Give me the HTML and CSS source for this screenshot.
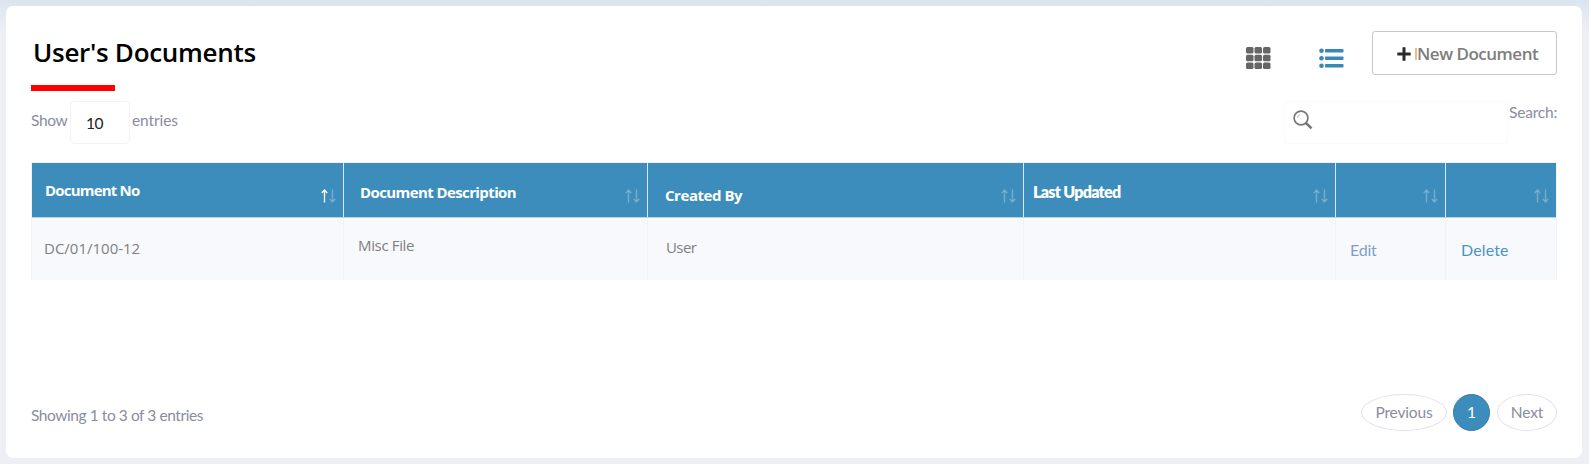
FILE: index.html
```html
<!DOCTYPE html>
<html lang="en">
<head>
<meta charset="utf-8">
<title>User's Documents</title>
<link rel="stylesheet" href="styles.css">
</head>
<body>
<svg class="defs" aria-hidden="true">
  <symbol id="up" viewBox="0 0 7 14"><path d="M3.5 13.5V1M.8 4L3.5 1l2.700 3" fill="none" stroke="currentColor" stroke-width="1.300"/></symbol>
  <symbol id="down" viewBox="0 0 7 14"><path d="M3.500 .5V13M.8 10l2.700 3 2.700-3" fill="none" stroke="currentColor" stroke-width="1.300"/></symbol>
</svg>
<div class="page-bg">
<main class="card">
  <header class="head">
    <h1 class="title">User's Documents</h1>
    <div class="actions">
      <svg class="grid-icon" viewBox="0 0 25 23" fill="#666"><rect x="0" y="0" width="7.500" height="6.500" rx="1.500"/><rect x="8.500" y="0" width="7.500" height="6.500" rx="1.500"/><rect x="17" y="0" width="7.500" height="6.500" rx="1.500"/><rect x="0" y="7.700" width="7.500" height="6.500" rx="1.500"/><rect x="8.500" y="7.700" width="7.500" height="6.500" rx="1.500"/><rect x="17" y="7.700" width="7.500" height="6.500" rx="1.500"/><rect x="0" y="15.400" width="7.500" height="6.500" rx="1.500"/><rect x="8.500" y="15.400" width="7.500" height="6.500" rx="1.500"/><rect x="17" y="15.400" width="7.500" height="6.500" rx="1.500"/></svg>
      <svg class="list-icon" viewBox="0 0 25 21" fill="#3787bb"><circle cx="2.500" cy="2.700" r="2.300"/><circle cx="2.500" cy="10.200" r="2.300"/><circle cx="2.500" cy="17.700" r="2.300"/><rect x="6" y="1" width="18.500" height="3.500" rx=".8"/><rect x="6" y="8.500" width="18.500" height="3.500" rx=".8"/><rect x="6" y="16" width="18.500" height="3.500" rx=".8"/></svg>
      <button class="new-btn"><svg class="plus" viewBox="0 0 14 14"><path d="M7 .3v13.400M.3 7h13.400" stroke="#2b2b2b" stroke-width="3"/></svg><i class="caret"></i><span>New Document</span></button>
    </div>
  </header>
  <div class="accent"></div>
  <div class="controls">
    <label class="length"><span class="show">Show</span><span class="select">10</span><span class="entries">entries</span></label>
    <label class="search"><span class="search-box"><svg class="lens" viewBox="0 0 20 20" fill="none" stroke="#777"><circle cx="8" cy="8" r="6.900" stroke-width="1.700"/><path d="M4.500 8A3.500 3.500 0 0 1 7 4.500" stroke="#bbb" stroke-width="1"/><path d="M13 13l5.500 5.300" stroke-width="2.500"/></svg></span><span class="search-text">Search:</span></label>
  </div>
  <div class="table">
    <div class="row header">
      <div class="cell h-no"><span>Document No</span><span class="sort asc"><svg><use href="#up"/></svg><svg><use href="#down"/></svg></span></div>
      <div class="cell h-desc"><span>Document Description</span><span class="sort"><svg><use href="#up"/></svg><svg><use href="#down"/></svg></span></div>
      <div class="cell h-by"><span>Created By</span><span class="sort"><svg><use href="#up"/></svg><svg><use href="#down"/></svg></span></div>
      <div class="cell h-last"><span>Last Updated</span><span class="sort"><svg><use href="#up"/></svg><svg><use href="#down"/></svg></span></div>
      <div class="cell"><span class="sort"><svg><use href="#up"/></svg><svg><use href="#down"/></svg></span></div>
      <div class="cell"><span class="sort"><svg><use href="#up"/></svg><svg><use href="#down"/></svg></span></div>
    </div>
    <div class="row body">
      <div class="cell c-no"><span>DC/01/100-12</span></div>
      <div class="cell c-desc"><span>Misc File</span></div>
      <div class="cell c-by"><span>User</span></div>
      <div class="cell"></div>
      <div class="cell c-edit"><a>Edit</a></div>
      <div class="cell c-delete"><a>Delete</a></div>
    </div>
  </div>
  <footer class="foot">
    <div class="info"><span>Showing 1 to 3 of 3 entries</span></div>
    <nav class="pages"><span class="page prev">Previous</span><span class="page current">1</span><span class="page next">Next</span></nav>
  </footer>
</main>
</div>
</body>
</html>
```
FILE: styles.css
```css
* { box-sizing: border-box; }
body {
  margin: 0;
  overflow: hidden;
  background: #fff;
  font: 15.5px/20px Lato, sans-serif;
  letter-spacing: -.15px;
  color: #8a8c9f;
}
.page-bg {
  width: 1589px;
  height: 464px;
  padding: 6px 7px 6px 6px;
  background: linear-gradient(#dae5ee 0, #e0e8f0 8px, #eeeff5 32px);
}
span, a { white-space: nowrap; }
.defs { display: none; }
.card {
  height: 452px;
  padding: 25px 25px 0;
  background: #fff;
  border-radius: 7px;
}
.head { display: flex; justify-content: space-between; height: 54px; }
.title {
  margin: 3px 0 0 2px;
  font: 600 26px/36px "Open Sans", sans-serif;
  letter-spacing: -.29px;
  color: #000;
}
.actions { display: flex; align-items: flex-start; }
.grid-icon { width: 25px; height: 23px; margin: 16px 48px 0 0; }
.list-icon { width: 25px; height: 21px; margin: 17px 28px 0 0; }
.new-btn {
  display: flex;
  align-items: center;
  width: 185px;
  height: 44px;
  padding: 2px 0 0 24px;
  background: #fff;
  border: 1px solid #c8c8c8;
  border-radius: 3px;
  font: 600 17px/24px "Open Sans", sans-serif;
  letter-spacing: -.48px;
  color: #7d7d7d;
}
.plus { width: 14px; height: 14px; }
.caret { width: 2px; height: 12px; margin: 0 0 0 4px; background: #e6bd8b; }
.accent { width: 84px; height: 6px; background: #f00; }
.controls { display: flex; justify-content: space-between; padding-top: 10px; height: 71px; }
.length { display: flex; }
.show { width: 39px; padding-top: 9px; letter-spacing: -.35px; }
.entries { padding: 9px 0 0 2px; letter-spacing: -.1px; }
.select {
  width: 60px;
  height: 43px;
  padding: 11px 0 0 15px;
  border: 1px solid #f3f3f5;
  border-radius: 5px;
  letter-spacing: -.5px;
  color: #222;
}
.search { display: flex; gap: 1px; }
.search-box {
  width: 224px;
  height: 43px;
  padding: 8px;
  border: 1px solid #fafafb;
  border-radius: 5px;
}
.lens { display: block; width: 20px; height: 20px; }
.search-text { width: 48px; padding-top: 1px; letter-spacing: -.2px; }
.table { border: 1px solid #f1f2f5; border-bottom: 0; }
.row { display: grid; grid-template-columns: 311px 304px 376px 312px 110px 111px; }
.cell { display: flex; align-items: flex-start; border-left: 1px solid #f1f2f5; }
.cell:first-child { border-left: 0; }
.header { height: 55px; background: #3c8dbc; color: #fff; border-bottom: 1px solid #b8d4e5; font: 700 15px/20px "Open Sans", sans-serif; letter-spacing: -.6px; }
.header .cell { justify-content: space-between; border-color: #dbe9f1; }
.sort { display: flex; gap: 1px; margin: 26px 7px 0 auto; color: #77afd0; }
.sort svg { width: 7px; height: 14px; }
.asc svg:first-child { color: #fff; }
.h-no { padding: 17px 0 0 13px; letter-spacing: -.8px; }
.h-no .sort { margin-top: 9px; }
.h-desc { padding: 19px 0 0 16px; }
.h-desc .sort { margin-top: 7px; }
.h-by { padding: 22px 0 0 17px; letter-spacing: -.45px; }
.h-by .sort { margin-top: 4px; }
.h-last { padding: 19px 0 0 9px; font: 800 16px/20px Lato, sans-serif; letter-spacing: -.7px; }
.h-last .sort { margin-top: 7px; }
.body { height: 62px; background: #f8f9fd; color: #808080; font: 15px/20px "Open Sans", sans-serif; letter-spacing: 0; }
.c-no { padding: 20px 0 0 12px; }
.c-desc { padding: 17px 0 0 14px; letter-spacing: -.35px; }
.c-by { padding: 19px 0 0 18px; letter-spacing: -.6px; }
.c-edit, .c-delete { padding: 22px 0 0 14px; font: 16px/20px Lato, sans-serif; color: #7f9fc8; }
.c-edit { letter-spacing: -.2px; }
.c-delete { padding-left: 15px; color: #4a94c2; letter-spacing: .15px; }
.foot { display: flex; justify-content: space-between; padding-top: 114px; }
.info { padding-top: 11px; letter-spacing: -.43px; }
.pages { display: flex; }
.page {
  display: flex;
  align-items: center;
  justify-content: center;
  height: 37px;
  padding-bottom: 1px;
  border: 1px solid #e2e0ec;
  border-radius: 50%;
}
.prev { width: 86px; }
.current { width: 37px; margin: 0 7px 0 6px; background: #3c8dbc; border-color: #3580ac; color: #fff; }
.next { width: 60px; }
```
